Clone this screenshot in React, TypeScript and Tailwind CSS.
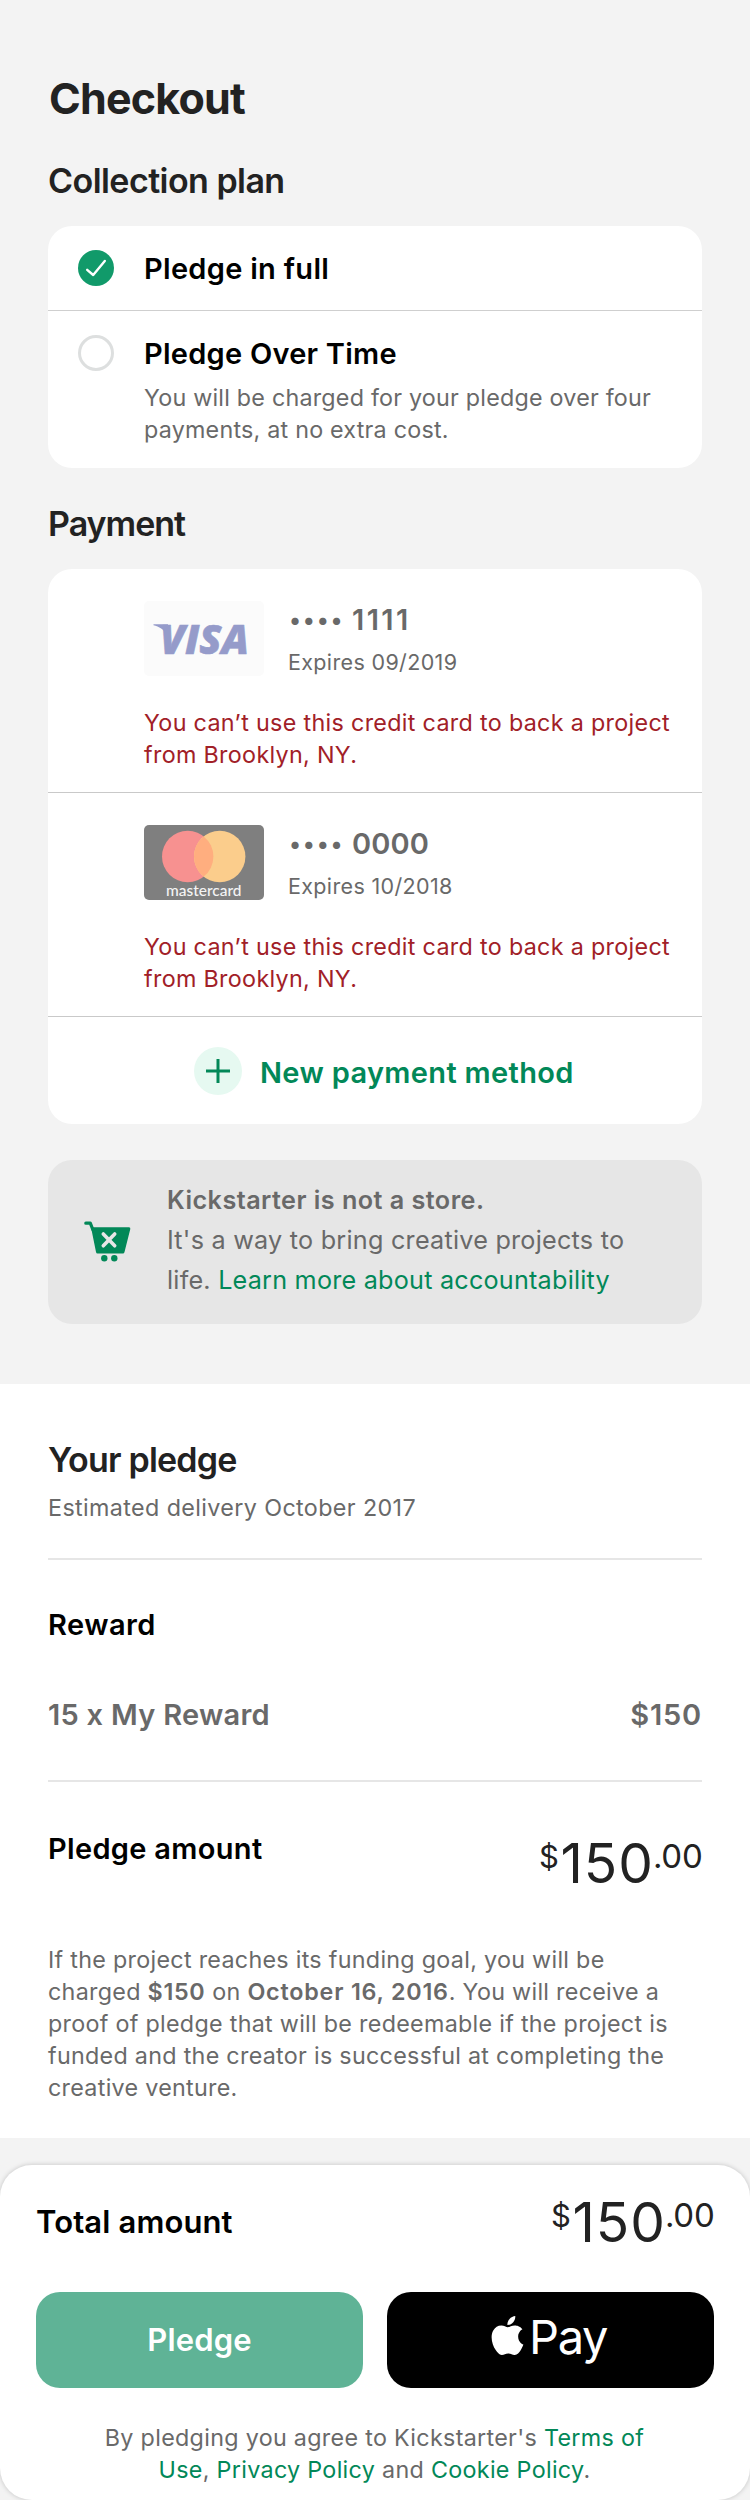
import type { ReactNode } from 'react';
import { SiApple } from 'react-icons/si';

function SectionTitle({ children, className = '' }: { children: ReactNode; className?: string }) {
  return <h2 className={`text-[34px] leading-10 font-semibold text-[#222222] whitespace-nowrap ${className}`}>{children}</h2>;
}

function Label({ children, className = '' }: { children: ReactNode; className?: string }) {
  return <div className={`text-[29px] leading-[38px] -mb-0.5 font-semibold whitespace-nowrap ${className}`}>{children}</div>;
}

function Price() {
  return (
    <div className="flex shrink-0 items-start text-[#222222] whitespace-nowrap">
      <span className="w-[21.5px] pt-1 text-[31px] leading-10">$</span>
      <span className="w-[92.5px] text-[55px] leading-[60px] tracking-[1px]">150</span>
      <span className="w-[49px] pt-[3px] text-[33px] leading-10 tracking-[-0.3px]">.00</span>
    </div>
  );
}

function VisaLogo() {
  return (
    <svg width="120" height="75" viewBox="0 0 120 75" className="shrink-0">
      <rect width="120" height="75" rx="5" fill="#fbfbfb" />
      <path d="M9.5 23.2H24L23 34C20 28 15 25.6 9.5 24.2Z" fill="#959bca" />
      <text x="16" y="52.6" fontFamily="Open Sans" fontStyle="italic" fontWeight="800" fontSize="41" textLength="89" lengthAdjust="spacingAndGlyphs" fill="#959bca" stroke="#959bca" strokeWidth="0.6">
        VISA
      </text>
    </svg>
  );
}

function MastercardLogo() {
  return (
    <svg width="120" height="75" viewBox="0 0 120 75" className="shrink-0">
      <rect width="120" height="75" rx="5" fill="#7f7f7f" />
      <circle cx="43.7" cy="31.5" r="25.7" fill="#f79190" />
      <circle cx="75.7" cy="31.5" r="25.7" fill="#fbcd8c" />
      <path d="M59.7 11.4A25.7 25.7 0 0 1 59.7 51.6A25.7 25.7 0 0 1 59.7 11.4Z" fill="#ffae7f" />
      <text x="22" y="70.5" fontFamily="Lato" fontWeight="500" fontSize="14.5" textLength="75.5" lengthAdjust="spacingAndGlyphs" fill="#f4f4f4">
        mastercard
      </text>
    </svg>
  );
}

function CardRow({ logo, digits, tracking, expires }: { logo: ReactNode; digits: string; tracking: string; expires: string }) {
  return (
    <div className="box-content h-[223px] border-b border-[#c9c9c9] pl-24">
      <div className="flex gap-6 pt-8">
        {logo}
        <div className="text-[#696969]">
          <Label className="flex">
            <span className="flex w-[64px] text-[23px]">
              {[0, 1, 2, 3].map((i) => (
                <span key={i} className="w-[13.9px] text-center">•</span>
              ))}
            </span>
            <span className={tracking}>{digits}</span>
          </Label>
          <div className="mt-2.5 text-[21.5px] leading-[30px] tracking-[0.35px]">{expires}</div>
        </div>
      </div>
      <p className="mt-[30px] text-[23.3px] leading-8 tracking-[0.32px] whitespace-nowrap text-[#a12027]">
        You can’t use this credit card to back a project
        <br />
        from Brooklyn, NY.
      </p>
    </div>
  );
}

export default function App() {
  return (
    <div className="flex min-h-[2500px] w-[750px] flex-col overflow-hidden bg-[#f3f3f3] font-['Inter',sans-serif] text-black">
      <section className="flex h-[1384px] flex-col px-12 pt-[70px]">
        <h1 className="ml-px text-[43px] leading-[56px] font-bold tracking-[-0.8px] text-[#222222]">Checkout</h1>
        <SectionTitle className="mt-[35px] tracking-[-0.55px]">Collection plan</SectionTitle>
        <div className="mt-[25px] h-[242px] rounded-3xl bg-white">
          <div className="flex h-[85px] items-start gap-[30px] border-b border-[#cfcfcf] pt-6 pl-[30px]">
            <svg width="36" height="36" viewBox="0 0 36 36">
              <circle cx="18" cy="18" r="18" fill="#119a6a" />
              <path d="M9.2 19.8L15.2 25L26.8 11" fill="none" stroke="#fff" strokeWidth="2.4" strokeLinecap="round" strokeLinejoin="round" />
            </svg>
            <Label className="tracking-[0.3px]">Pledge in full</Label>
          </div>
          <div className="flex items-start gap-[30px] pt-6 pl-[30px]">
            <span className="size-9 shrink-0 rounded-full border-[3.5px] border-[#dddfdf]" />
            <div>
              <Label className="tracking-[0.25px]">Pledge Over Time</Label>
              <p className="mt-[11px] text-[23.3px] leading-8 tracking-[0.22px] whitespace-nowrap text-[#696969]">
                You will be charged for your pledge over four
                <br />
                payments, at no extra cost.
              </p>
            </div>
          </div>
        </div>

        <SectionTitle className="mt-9 tracking-[-1px]">Payment</SectionTitle>
        <div className="mt-[25px] h-[555px] rounded-3xl bg-white">
          <CardRow logo={<VisaLogo />} digits="1111" tracking="tracking-[2.4px]" expires="Expires 09/2019" />
          <CardRow logo={<MastercardLogo />} digits="0000" tracking="tracking-[0.1px]" expires="Expires 10/2018" />
          <button className="flex h-[107px] w-full items-center gap-[18px] pl-[146px] text-[#028858]">
            <svg width="48" height="48" viewBox="0 0 48 48">
              <circle cx="24" cy="24" r="24" fill="#e6f9f1" />
              <path d="M12 24H36M24 12V36" stroke="#028858" strokeWidth="3" />
            </svg>
            <Label className="pt-0.5 tracking-[0.34px]">New payment method</Label>
          </button>
        </div>

        <div className="mt-9 flex h-[164px] rounded-3xl bg-[#e6e6e6] pt-5 pl-9 text-[25.2px] leading-10 whitespace-nowrap text-[#696969]">
          <svg width="48" height="42" viewBox="0 0 48 42" className="mt-[41px] mr-[35px] shrink-0" fill="#028858">
            <path d="M1.8 2.2H6.3L9 9" fill="none" stroke="#028858" strokeWidth="3.2" strokeLinecap="round" strokeLinejoin="round" />
            <path d="M7 6.2H45Q46.6 6.3 46.3 8L40.5 31Q40.2 32.5 38.8 32.5H13.5Q12.3 32.5 12 31Z" />
            <path d="M19.3 13L30.7 24.8M30.7 13L19.3 24.8" stroke="#e6e6e6" strokeWidth="3.6" strokeLinecap="round" />
            <circle cx="20.3" cy="37.2" r="3.2" />
            <circle cx="30.3" cy="37.2" r="3.2" />
          </svg>
          <div>
            <div className="font-semibold tracking-[0.46px]">Kickstarter is not a store.</div>
            <div className="tracking-[0.24px]">It's a way to bring creative projects to</div>
            <div className="tracking-[0.22px]">
              life. <a className="text-[#028858]">Learn more about accountability</a>
            </div>
          </div>
        </div>
      </section>

      <section className="flex h-[754px] flex-col bg-white px-12 pt-14">
        <SectionTitle className="tracking-[-0.8px]">Your pledge</SectionTitle>
        <div className="mt-3 text-[23.3px] leading-8 tracking-[0.38px] text-[#696969]">Estimated delivery October 2017</div>
        <div className="mt-[34px] h-0.5 shrink-0 bg-[#e6e6e6]" />
        <Label className="mt-[46px] tracking-[0.45px]">Reward</Label>
        <div className="mt-[54px] flex h-9 justify-between text-[#696969]">
          <Label className="tracking-[0.27px]">15 x My Reward</Label>
          <Label className="tracking-[0.8px]">$150</Label>
        </div>
        <div className="mt-12 h-0.5 shrink-0 bg-[#e6e6e6]" />
        <div className="flex h-[112px] items-start justify-between pt-12">
          <Label className="tracking-[0.32px]">Pledge amount</Label>
          <div className="pt-[3px]">
            <Price />
          </div>
        </div>
        <p className="mt-[50px] text-[23.3px] leading-8 tracking-[0.29px] whitespace-nowrap text-[#696969]">
          If the project reaches its funding goal, you will be
          <br />
          charged <b className="font-semibold tracking-[0.7px]">$150</b> on{' '}
          <b className="font-semibold tracking-[0.8px]">October 16, 2016</b>. You will receive a
          <br />
          proof of pledge that will be redeemable if the project is
          <br />
          funded and the creator is successful at completing the
          <br />
          creative venture.
        </p>
      </section>

      <footer className="mt-[27px] h-[335px] rounded-[32px] bg-white px-9 pt-[27px] shadow-[0_0_5px_rgba(0,0,0,0.2)]">
        <div className="flex h-16 items-start justify-between">
          <div className="mt-[12px] text-[31px] leading-9 font-semibold tracking-[0.12px]">Total amount</div>
          <Price />
        </div>
        <div className="mt-9 grid grid-cols-2 gap-6">
          <button className="h-24 rounded-3xl bg-[#5fb396] text-[31px] font-semibold tracking-[0.15px] text-white">Pledge</button>
          <button className="flex h-24 items-start rounded-3xl bg-black pl-[101px] text-white">
            <SiApple size={39} className="mt-6 shrink-0" />
            <span className="mt-[17px] ml-[2px] text-[47px] leading-[56px] tracking-[-1.3px]">Pay</span>
          </button>
        </div>
        <p className="mt-[34px] -ml-px text-center text-[23.3px] leading-8 tracking-[0.31px] whitespace-nowrap text-[#696969]">
          By pledging you agree to Kickstarter's <a className="text-[#028858]">Terms of</a>
          <br />
          <a className="text-[#028858]">Use</a>, <a className="text-[#028858]">Privacy Policy</a> and{' '}
          <a className="text-[#028858]">Cookie Policy</a>.
        </p>
      </footer>
    </div>
  );
}
